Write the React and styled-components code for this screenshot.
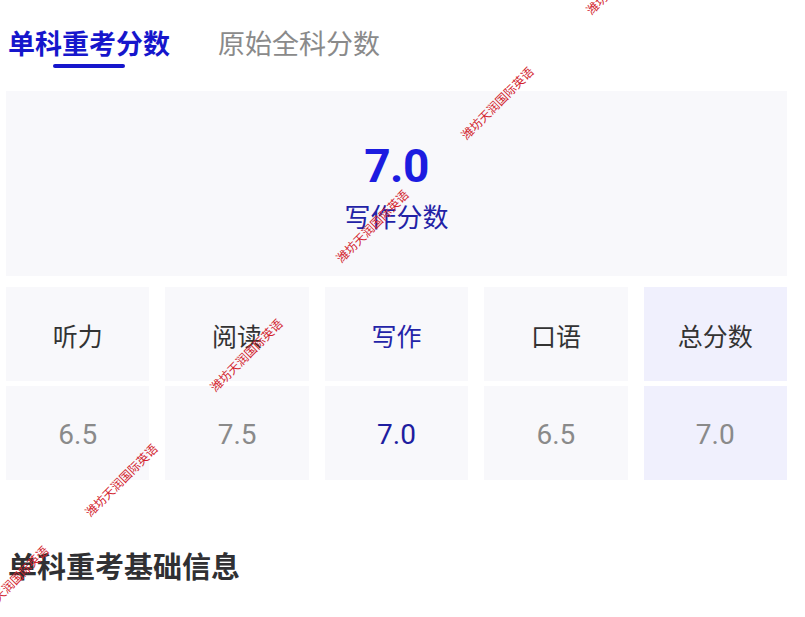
import React from "react";
import styled, { createGlobalStyle } from "styled-components";

const GlobalStyle = createGlobalStyle`
  html, body {
    margin: 0;
    padding: 0;
    background: #ffffff;
  }
  body {
    font-family: Roboto, "Noto Sans CJK SC", "Noto Sans", sans-serif;
    -webkit-font-smoothing: antialiased;
  }
`;

const Page = styled.div`
  position: relative;
  width: 805px;
  height: 617px;
  overflow: hidden;
  box-sizing: border-box;
  padding: 27px 18px 0 6px;
`;

const TabBar = styled.div`
  display: flex;
  gap: 48px;
  padding-left: 2px;
`;

const Tab = styled.div`
  display: flex;
  flex-direction: column;
  align-items: center;
  font-size: 27px;
  line-height: 36px;
  font-weight: ${(p) => (p.$active ? 700 : 400)};
  color: ${(p) => (p.$active ? "#1616cc" : "#8a8a8a")};
`;

const Indicator = styled.div`
  width: 72px;
  height: 4px;
  margin-top: 1px;
  border-radius: 2px;
  background: ${(p) => (p.$visible ? "#1616cc" : "transparent")};
`;

const HeroCard = styled.div`
  margin-top: 23px;
  height: 185px;
  box-sizing: border-box;
  padding-top: 52px;
  background: #f8f8fb;
  display: flex;
  flex-direction: column;
  align-items: center;
`;

const HeroValue = styled.div`
  font-size: 46px;
  line-height: 46px;
  font-weight: 700;
  color: #1c1ce0;
  letter-spacing: -0.5px;
`;

const HeroLabel = styled.div`
  margin-top: 14px;
  font-size: 26px;
  line-height: 30px;
  color: #2222a6;
`;

const ScoreGrid = styled.div`
  margin-top: 11px;
  display: grid;
  grid-template-columns: repeat(5, 1fr);
  grid-template-rows: 94px 94px;
  column-gap: 16px;
  row-gap: 5px;
`;

const Cell = styled.div`
  display: flex;
  align-items: center;
  justify-content: center;
  padding-top: 2px;
  background: ${(p) => (p.$total ? "#f0f0fd" : "#f8f8fb")};
`;

const SubjectName = styled.span`
  font-size: 25px;
  color: ${(p) => (p.$current ? "#2424a8" : "#333333")};
`;

const SubjectScore = styled.span`
  font-size: 28px;
  color: ${(p) => (p.$current ? "#1e1ea0" : "#8a8a8a")};
`;

const SectionTitle = styled.h2`
  margin: 68px 0 0 2px;
  font-size: 29px;
  line-height: 40px;
  font-weight: 700;
  color: #303033;
`;

const Watermark = styled.span`
  position: absolute;
  transform: translate(-50%, -50%) rotate(-45deg);
  font-family: "Noto Sans CJK SC", sans-serif;
  font-size: 12px;
  line-height: 14px;
  white-space: nowrap;
  color: #d2222c;
  pointer-events: none;
`;

const subjects = [
  { name: "听力", score: "6.5" },
  { name: "阅读", score: "7.5" },
  { name: "写作", score: "7.0", current: true },
  { name: "口语", score: "6.5" },
  { name: "总分数", score: "7.0", total: true },
];

const marks = [
  { x: 12, y: 582 },
  { x: 121, y: 480 },
  { x: 246, y: 355 },
  { x: 372, y: 226 },
  { x: 497, y: 103 },
  { x: 622, y: -22 },
];

export default function App() {
  return (
    <>
      <GlobalStyle />
      <Page>
        <TabBar>
          <Tab $active>
            单科重考分数
            <Indicator $visible />
          </Tab>
          <Tab>
            原始全科分数
            <Indicator />
          </Tab>
        </TabBar>

        <HeroCard>
          <HeroValue>7.0</HeroValue>
          <HeroLabel>写作分数</HeroLabel>
        </HeroCard>

        <ScoreGrid>
          {subjects.map((s) => (
            <Cell key={s.name} $total={s.total}>
              <SubjectName $current={s.current}>{s.name}</SubjectName>
            </Cell>
          ))}
          {subjects.map((s) => (
            <Cell key={s.name + "-score"} $total={s.total}>
              <SubjectScore $current={s.current}>{s.score}</SubjectScore>
            </Cell>
          ))}
        </ScoreGrid>

        <SectionTitle>单科重考基础信息</SectionTitle>

        {marks.map((m, i) => (
          <Watermark key={i} style={{ left: m.x, top: m.y }}>
            潍坊天润国际英语
          </Watermark>
        ))}
      </Page>
    </>
  );
}
